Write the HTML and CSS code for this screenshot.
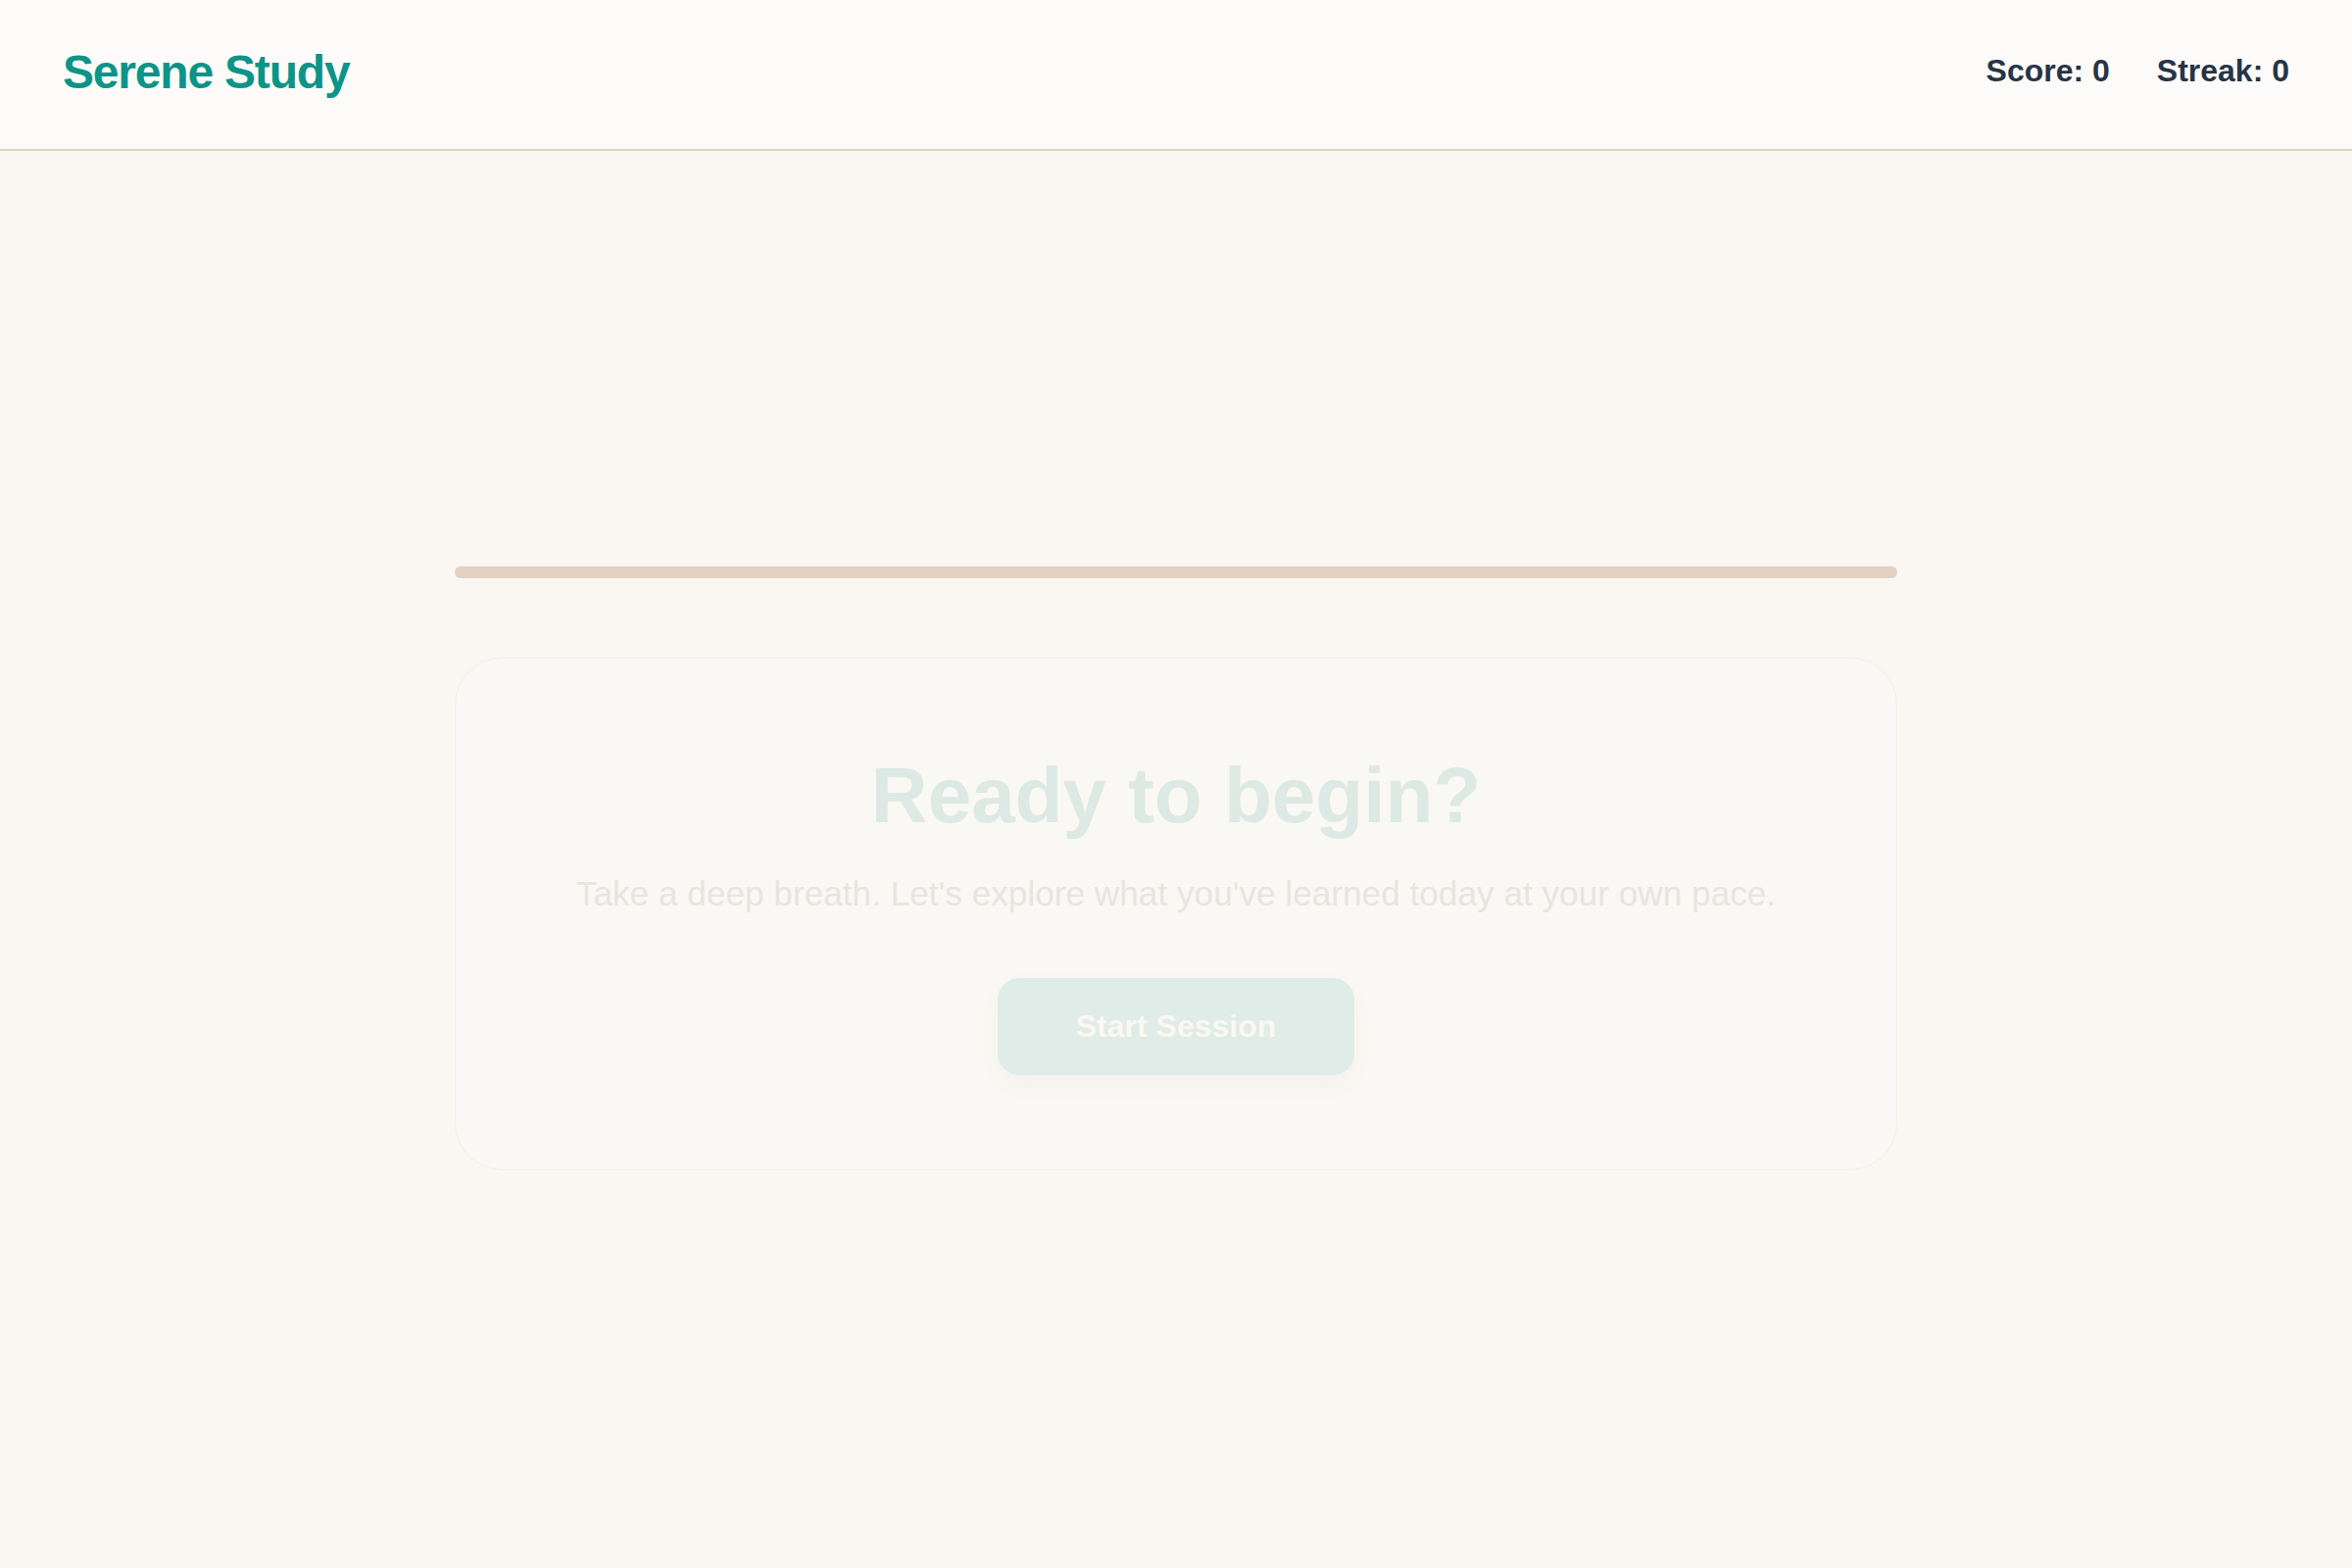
FILE: index.html
```html
<!DOCTYPE html>
<html lang="en">
<head>
<meta charset="utf-8">
<title>Serene Study</title>
<link rel="stylesheet" href="styles.css">
</head>
<body>
<header class="topbar">
  <div class="logo">Serene Study</div>
  <div class="stats">
    <span class="stat">Score: 0</span>
    <span class="stat">Streak: 0</span>
  </div>
</header>
<main class="main">
  <div class="progress"><div class="progress-fill" style="width:0%"></div></div>
  <section class="card">
    <h1 class="card-title">Ready to begin?</h1>
    <p class="card-text">Take a deep breath. Let's explore what you've learned today at your own pace.</p>
    <button class="start-btn" type="button">Start Session</button>
  </section>
</main>
</body>
</html>
```

FILE: styles.css
```css
* { box-sizing: border-box; }

html, body {
  margin: 0;
  padding: 0;
}

body {
  background: #faf7f2;
  font-family: "Liberation Sans", Arial, sans-serif;
  min-height: 1600px;
}

.topbar {
  display: flex;
  align-items: center;
  justify-content: space-between;
  height: 154px;
  padding: 0 64px 5px 64px;
  background: #fcfbf9;
  border-bottom: 2px solid #e3d2c4;
}

.logo {
  font-size: 48px;
  font-weight: 700;
  letter-spacing: -0.025em;
  color: #0d9488;
}

.stats {
  display: flex;
  gap: 48px;
  padding-bottom: 3px;
}

.stat {
  font-size: 32px;
  font-weight: 700;
  color: #283446;
}

.main {
  display: flex;
  flex-direction: column;
  align-items: center;
  padding-top: 424px;
}

.progress {
  width: 1472px;
  height: 12px;
  border-radius: 6px;
  background: #e3d0c1;
  overflow: hidden;
}

.progress-fill {
  height: 100%;
  background: #0d9488;
}

.card {
  width: 1472px;
  margin-top: 81px;
  padding: 98px 0 96px;
  display: flex;
  flex-direction: column;
  align-items: center;
  background: #faf8f4;
  border: 1px solid #f2eee8;
  border-radius: 48px;
}

.card-title {
  margin: 0;
  font-size: 80px;
  line-height: 84px;
  font-weight: 700;
  color: #dde9e4;
}

.card-text {
  margin: 30px 0 0;
  font-size: 35.2px;
  line-height: 56px;
  color: #e8e5e0;
}

.start-btn {
  margin-top: 58px;
  padding: 30px 80px;
  border: none;
  border-radius: 22px;
  background: #dfece7;
  color: #fbf8f4;
  font-family: "Liberation Sans", Arial, sans-serif;
  font-size: 32px;
  line-height: 39px;
  font-weight: 700;
  box-shadow: 0 10px 24px rgba(120, 100, 80, 0.04);
  cursor: pointer;
}
```
